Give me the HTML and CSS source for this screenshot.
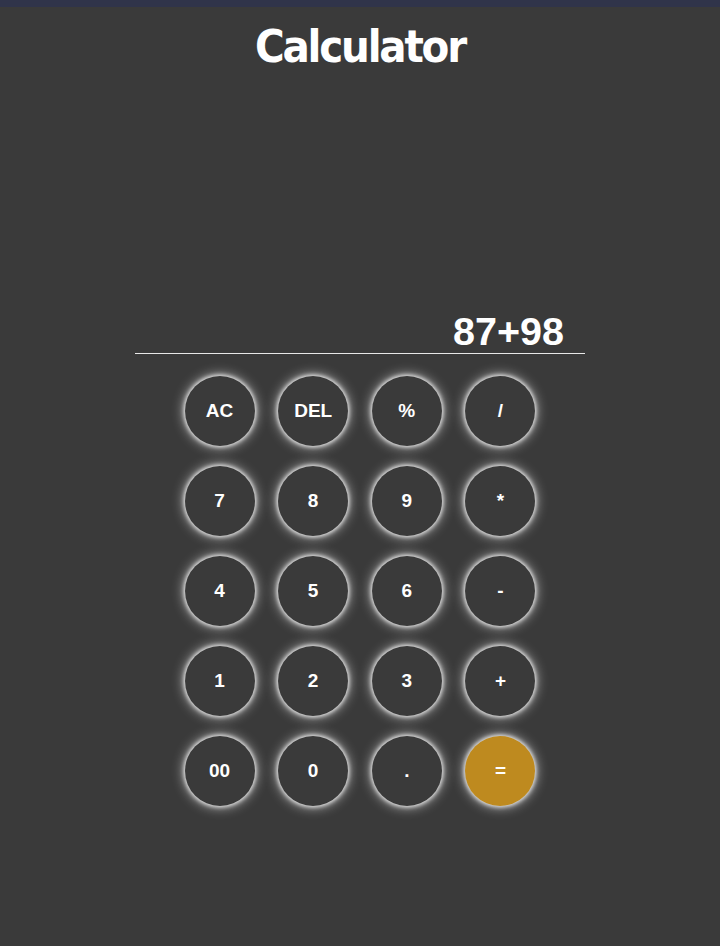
FILE: index.html
```html
<!DOCTYPE html>
<html>
<head>
<meta charset="utf-8">
<link rel="stylesheet" href="styles.css">
</head>
<body>
<div class="topbar"></div>
<h1 class="title">Calculator</h1>
<div class="display"><span class="expr">87+98</span></div>
<div class="keys">
  <button class="key">AC</button>
  <button class="key">DEL</button>
  <button class="key">%</button>
  <button class="key">/</button>
  <button class="key">7</button>
  <button class="key">8</button>
  <button class="key">9</button>
  <button class="key">*</button>
  <button class="key">4</button>
  <button class="key">5</button>
  <button class="key">6</button>
  <button class="key">-</button>
  <button class="key">1</button>
  <button class="key">2</button>
  <button class="key">3</button>
  <button class="key">+</button>
  <button class="key">00</button>
  <button class="key">0</button>
  <button class="key">.</button>
  <button class="key equal">=</button>
</div>
</body>
</html>
```
FILE: styles.css
```css
html, body {
  margin: 0;
  padding: 0;
  background: #3a3a3a;
  height: 100%;
}
body {
  font-family: "Liberation Sans", Arial, sans-serif;
  color: #fff;
}
.topbar {
  height: 7px;
  background: #30344a;
}
.title {
  margin: 14px 0 0;
  text-align: center;
  font-family: "DejaVu Sans Condensed", "DejaVu Sans", sans-serif;
  font-stretch: condensed;
  font-weight: bold;
  font-size: 45px;
  line-height: 52px;
  letter-spacing: -2.2px;
}
.display {
  width: 450px;
  margin: 0 auto;
  height: 281px;
  border-bottom: 1px solid #e8e8e8;
  display: flex;
  justify-content: flex-end;
  align-items: flex-end;
  box-sizing: border-box;
  padding-right: 21px;
}
.expr {
  font-size: 39.5px;
  font-weight: bold;
  line-height: 43px;
}
.keys {
  width: 351px;
  margin: 22px auto 0;
  display: grid;
  grid-template-columns: repeat(4, 70px);
  column-gap: 23.67px;
  row-gap: 20px;
}
.key {
  width: 70px;
  height: 70px;
  border-radius: 50%;
  border: none;
  background: #3a3a3a;
  color: #fff;
  font-family: "Liberation Sans", Arial, sans-serif;
  font-weight: bold;
  font-size: 19px;
  padding: 0;
  box-shadow: 0 0 4px 1px #eee, 0 0 12px 2px rgba(255, 255, 255, 0.55);
}
.key.equal {
  background: #be8a1f;
}
```
